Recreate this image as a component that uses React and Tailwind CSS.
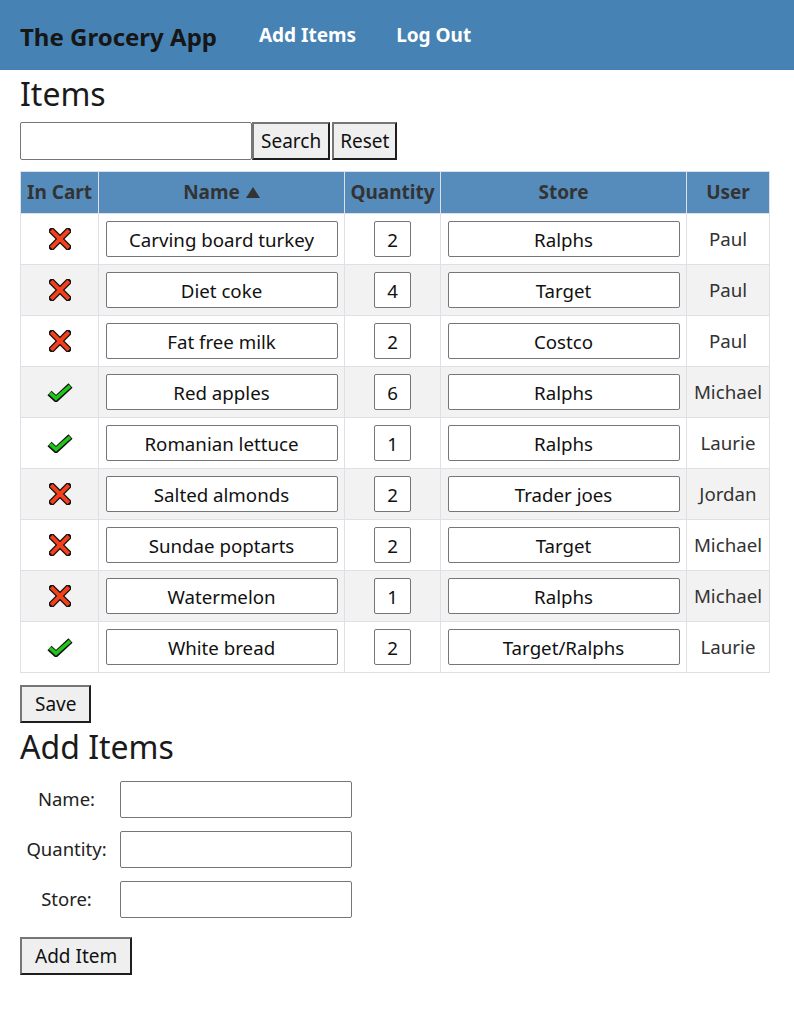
import React from "react";

const rows = [
  { cart: false, name: "Carving board turkey", qty: "2", store: "Ralphs", user: "Paul" },
  { cart: false, name: "Diet coke", qty: "4", store: "Target", user: "Paul" },
  { cart: false, name: "Fat free milk", qty: "2", store: "Costco", user: "Paul" },
  { cart: true, name: "Red apples", qty: "6", store: "Ralphs", user: "Michael" },
  { cart: true, name: "Romanian lettuce", qty: "1", store: "Ralphs", user: "Laurie" },
  { cart: false, name: "Salted almonds", qty: "2", store: "Trader joes", user: "Jordan" },
  { cart: false, name: "Sundae poptarts", qty: "2", store: "Target", user: "Michael" },
  { cart: false, name: "Watermelon", qty: "1", store: "Ralphs", user: "Michael" },
  { cart: true, name: "White bread", qty: "2", store: "Target/Ralphs", user: "Laurie" },
];

function Cross() {
  return (
    <svg width="22" height="22" viewBox="0 0 22 22">
      <path d="M3 3 L19 19 M19 3 L3 19" stroke="#111" strokeWidth="6.5" strokeLinecap="square" fill="none" />
      <path d="M3.6 3.6 L18.4 18.4 M18.4 3.6 L3.6 18.4" stroke="#f2401c" strokeWidth="4" strokeLinecap="square" fill="none" />
    </svg>
  );
}

function Check() {
  return (
    <svg width="26" height="19" viewBox="0 0 26 19">
      <path d="M2.5 10 L9 16 L23.5 2.5" stroke="#111" strokeWidth="6" strokeLinejoin="miter" fill="none" />
      <path d="M3 10 L9 15.4 L23 3" stroke="#22c51a" strokeWidth="3.6" strokeLinejoin="miter" fill="none" />
    </svg>
  );
}

const btn =
  "bg-[#efefef] border-2 border-t-[#767676] border-l-[#767676] border-b-[#1e1e1e] border-r-[#1e1e1e] text-[19px] text-[#111] leading-none";

const cellInput =
  "h-[36px] border border-[#767676] rounded-[2px] text-center text-[18.7px] text-[#111] bg-white outline-none";

export default function App() {
  return (
    <div className="min-h-[1017px] bg-white text-[#222]" style={{ fontFamily: '"Noto Sans", "Open Sans", sans-serif' }}>
      <header className="h-[70px] bg-[#4682b4] flex items-center px-[20px]">
        <div className="text-[24px] font-bold text-[#161616] mt-[3px]">The Grocery App</div>
        <nav className="flex ml-[42px] gap-[40px] text-[19px] font-bold text-white mt-[1px]">
          <span>Add Items</span>
          <span>Log Out</span>
        </nav>
      </header>
      <main className="px-[20px]">
        <h1 className="text-[32px] leading-[45px] text-[#1a1a1a] mt-[1px]">Items</h1>
        <div className="flex items-stretch h-[38px] mt-[6px]">
          <input className="w-[232px] border border-[#767676] rounded-[2px] outline-none" />
          <button className={btn + " px-[7px]"}>Search</button>
          <button className={btn + " px-[6px] ml-[2px]"}>Reset</button>
        </div>
        <table className="mt-[11px] w-[750px] border-collapse">
          <thead>
            <tr className="bg-[#558cbc] h-[42px] text-[19px] font-bold text-[#333]">
              <th className="border border-[#dde0e6] w-[78px]">In Cart</th>
              <th className="border border-[#dde0e6] w-[246px]">
                <span className="inline-flex items-center gap-[6px]">
                  Name
                  <svg width="14" height="12" viewBox="0 0 14 12"><path d="M7 0 L14 11 L0 11 Z" fill="#333" /></svg>
                </span>
              </th>
              <th className="border border-[#dde0e6] w-[96px]">Quantity</th>
              <th className="border border-[#dde0e6] w-[246px]">Store</th>
              <th className="border border-[#dde0e6] w-[83px]">User</th>
            </tr>
          </thead>
          <tbody>
            {rows.map((r, i) => (
              <tr key={i} className={(i % 2 === 1 ? "bg-[#f2f2f2]" : "bg-white") + " h-[51px]"}>
                <td className="border border-[#dde0e6] text-center">
                  <div className="flex justify-center">{r.cart ? <Check /> : <Cross />}</div>
                </td>
                <td className="border border-[#dde0e6]">
                  <div className="flex justify-center">
                    <input readOnly value={r.name} className={cellInput + " w-[232px]"} />
                  </div>
                </td>
                <td className="border border-[#dde0e6]">
                  <div className="flex justify-center">
                    <input readOnly value={r.qty} className={cellInput + " w-[37px]"} />
                  </div>
                </td>
                <td className="border border-[#dde0e6]">
                  <div className="flex justify-center">
                    <input readOnly value={r.store} className={cellInput + " w-[232px]"} />
                  </div>
                </td>
                <td className="border border-[#dde0e6] text-center text-[18.7px] text-[#333]">{r.user}</td>
              </tr>
            ))}
          </tbody>
        </table>
        <button className={btn + " h-[38px] px-[13px] mt-[12px]"}>Save</button>
        <h2 className="text-[32px] leading-[42px] text-[#1a1a1a] mt-[3px]">Add Items</h2>
        <div className="mt-[13px] flex flex-col gap-[14px]">
          {["Name:", "Quantity:", "Store:"].map((l) => (
            <div key={l} className="flex items-center h-[36px]">
              <label className="w-[93px] mr-[7px] text-center text-[18.5px] text-[#222]">{l}</label>
              <input className="w-[232px] h-[37px] border border-[#767676] rounded-[2px] outline-none" />
            </div>
          ))}
        </div>
        <button className={btn + " h-[38px] px-[13px] mt-[20px]"}>Add Item</button>
      </main>
    </div>
  );
}
